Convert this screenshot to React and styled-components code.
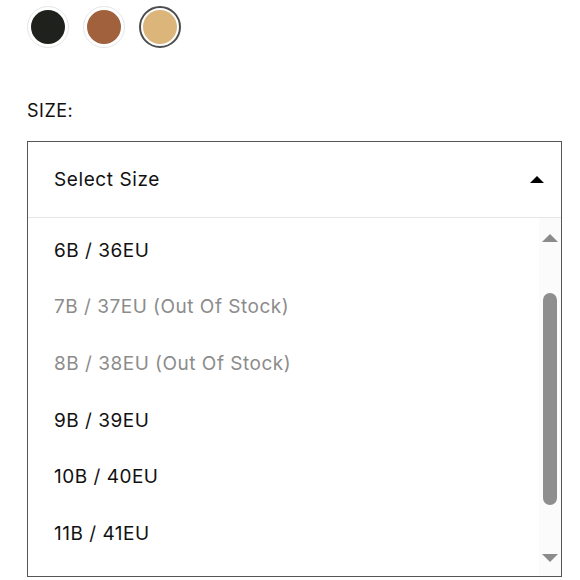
import React from "react";
import styled, { createGlobalStyle } from "styled-components";

const GlobalStyle = createGlobalStyle`
  body {
    margin: 0;
    background: #fff;
    font-family: "Inter", "Liberation Sans", sans-serif;
    color: #111;
  }
`;

const Page = styled.div`
  width: 580px;
  height: 580px;
  box-sizing: border-box;
  padding: 6px 19px 0 27px;
  overflow: hidden;
`;

const Swatches = styled.div`
  display: flex;
  gap: 14px;
`;

const Swatch = styled.button`
  width: 42px;
  height: 42px;
  box-sizing: border-box;
  border-radius: 50%;
  padding: ${(p) => (p.$active ? "2px" : "3px")};
  border: ${(p) => (p.$active ? "2px solid #4d4d4d" : "1px solid #e6e6e6")};
  background: ${(p) => p.$color};
  background-clip: content-box;
  cursor: pointer;
`;

const Label = styled.div`
  margin-top: 53px;
  font-size: 18px;
  line-height: 20px;
  letter-spacing: 0.5px;
`;

const Select = styled.div`
  margin-top: 20px;
  width: 535px;
  height: 436px;
  box-sizing: border-box;
  border: 1px solid #555;
  display: flex;
  flex-direction: column;
`;

const Header = styled.div`
  height: 75px;
  flex-shrink: 0;
  display: flex;
  align-items: center;
  justify-content: space-between;
  padding: 0 17px 0 26px;
  border-bottom: 1px solid #e6e6e6;
  font-size: 19px;
  letter-spacing: 0.6px;
`;

const Caret = styled.span`
  width: 0;
  height: 0;
  border-left: 7px solid transparent;
  border-right: 7px solid transparent;
  border-bottom: 7px solid #000;
`;

const ListArea = styled.div`
  flex: 1;
  display: flex;
  min-height: 0;
`;

const Options = styled.ul`
  flex: 1;
  list-style: none;
  margin: 0;
  padding: 4px 0 0;
`;

const Option = styled.li`
  height: 56.6px;
  display: flex;
  align-items: center;
  padding-left: 26px;
  font-size: 19px;
  letter-spacing: 0.5px;
  color: ${(p) => (p.$disabled ? "#8c8c8c" : "#111")};
`;

const Scrollbar = styled.div`
  width: 22px;
  flex-shrink: 0;
  background: #fbfbfb;
  display: flex;
  flex-direction: column;
  align-items: center;
  padding: 16px 0 14px;
  box-sizing: border-box;
`;

const Arrow = styled.span`
  width: 0;
  height: 0;
  border-left: 8px solid transparent;
  border-right: 8px solid transparent;
  ${(p) =>
    p.$down
      ? "border-top: 8px solid #8b8b8b;"
      : "border-bottom: 8px solid #8b8b8b;"}
`;

const Track = styled.div`
  flex: 1;
  width: 100%;
  display: flex;
  justify-content: center;
  padding: 51px 0 49px;
`;

const Thumb = styled.div`
  width: 14px;
  height: 100%;
  border-radius: 7px;
  background: #8e8e8e;
`;

const colors = [
  { color: "#1f211d" },
  { color: "#a0613c" },
  { color: "#dcb57a", active: true },
];

const sizes = [
  { label: "6B / 36EU" },
  { label: "7B / 37EU (Out Of Stock)", disabled: true },
  { label: "8B / 38EU (Out Of Stock)", disabled: true },
  { label: "9B / 39EU" },
  { label: "10B / 40EU" },
  { label: "11B / 41EU" },
];

const App = () => {
  return (
    <>
      <GlobalStyle />
      <Page>
        <Swatches>
          {colors.map((c) => (
            <Swatch key={c.color} $color={c.color} $active={c.active} />
          ))}
        </Swatches>
        <Label>SIZE:</Label>
        <Select>
          <Header>
            <span>Select Size</span>
            <Caret />
          </Header>
          <ListArea>
            <Options>
              {sizes.map((s) => (
                <Option key={s.label} $disabled={s.disabled}>
                  {s.label}
                </Option>
              ))}
            </Options>
            <Scrollbar>
              <Arrow />
              <Track>
                <Thumb />
              </Track>
              <Arrow $down />
            </Scrollbar>
          </ListArea>
        </Select>
      </Page>
    </>
  );
};

export default App;
